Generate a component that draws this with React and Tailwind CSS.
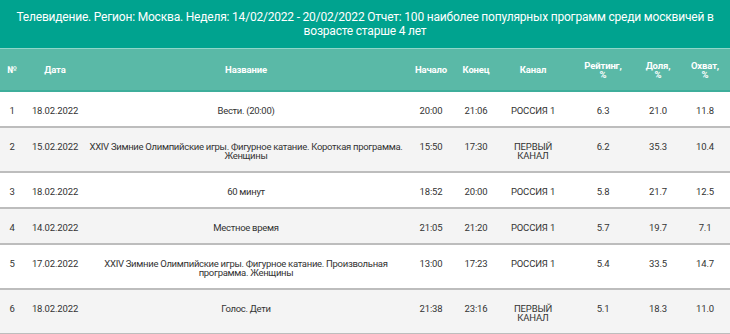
export default function App() {
  const rows = [
    ["1", "18.02.2022", ["Вести. (20:00)"], "20:00", "21:06", ["РОССИЯ 1"], "6.3", "21.0", "11.8"],
    ["2", "15.02.2022", ["XXIV Зимние Олимпийские игры. Фигурное катание. Короткая программа.", "Женщины"], "15:50", "17:30", ["ПЕРВЫЙ", "КАНАЛ"], "6.2", "35.3", "10.4"],
    ["3", "18.02.2022", ["60 минут"], "18:52", "20:00", ["РОССИЯ 1"], "5.8", "21.7", "12.5"],
    ["4", "14.02.2022", ["Местное время"], "21:05", "21:20", ["РОССИЯ 1"], "5.7", "19.7", "7.1"],
    ["5", "17.02.2022", ["XXIV Зимние Олимпийские игры. Фигурное катание. Произвольная", "программа. Женщины"], "13:00", "17:23", ["РОССИЯ 1"], "5.4", "33.5", "14.7"],
    ["6", "18.02.2022", ["Голос. Дети"], "21:38", "23:16", ["ПЕРВЫЙ", "КАНАЛ"], "5.1", "18.3", "11.0"],
  ];
  const widths = ["w-[24px]", "w-[62px]", "w-[320px]", "w-[50px]", "w-[40px]", "w-[74px]", "w-[66px]", "w-[44px]", "w-[50px]"];
  const heads = [["№"], ["Дата"], ["Название"], ["Начало"], ["Конец"], ["Канал"], ["Рейтинг,", "%"], ["Доля,", "%"], ["Охват,", "%"]];
  const lines = (arr) => arr.map((t, i) => <div key={i} className="whitespace-nowrap">{t}</div>);
  return (
    <div className="w-[730px] h-[334px] overflow-hidden bg-white font-['Roboto',sans-serif]">
      <div className="bg-[#00a38f] text-white text-[12px] tracking-[-0.2px] leading-[14px] text-center px-2 pt-[10px] pb-[10px] border-b border-[#8fd6c9]">
        <div className="whitespace-nowrap">Телевидение. Регион: Москва. Неделя: 14/02/2022 - 20/02/2022 Отчет: 100 наиболее популярных программ среди москвичей в</div>
        <div>возрасте старше 4 лет</div>
      </div>
      <table className="w-[730px] table-fixed border-collapse text-[9.5px] tracking-[-0.15px] leading-[9px] text-[#333]">
        <thead>
          <tr className="bg-[#5ab9a7] text-white border-b-[2px] border-[#3fae9b]">
            {heads.map((h, i) => (
              <th key={i} className={`${widths[i]} h-[42px] p-0 text-center align-middle font-bold`}>
                {lines(h)}
              </th>
            ))}
          </tr>
        </thead>
        <tbody>
          {rows.map((r, ri) => (
            <tr key={ri} className={`${ri % 2 ? "bg-[#f4f4f4]" : "bg-white"} border-b-2 border-[#bdbdbd]`}>
              {r.map((c, ci) => (
                <td key={ci} className={`pt-[14px] pb-[11px] px-0 text-center align-top ${ci === 2 ? "tracking-[-0.3px]" : ""}`}>
                  {Array.isArray(c) ? lines(c) : c}
                </td>
              ))}
            </tr>
          ))}
        </tbody>
      </table>
    </div>
  );
}
